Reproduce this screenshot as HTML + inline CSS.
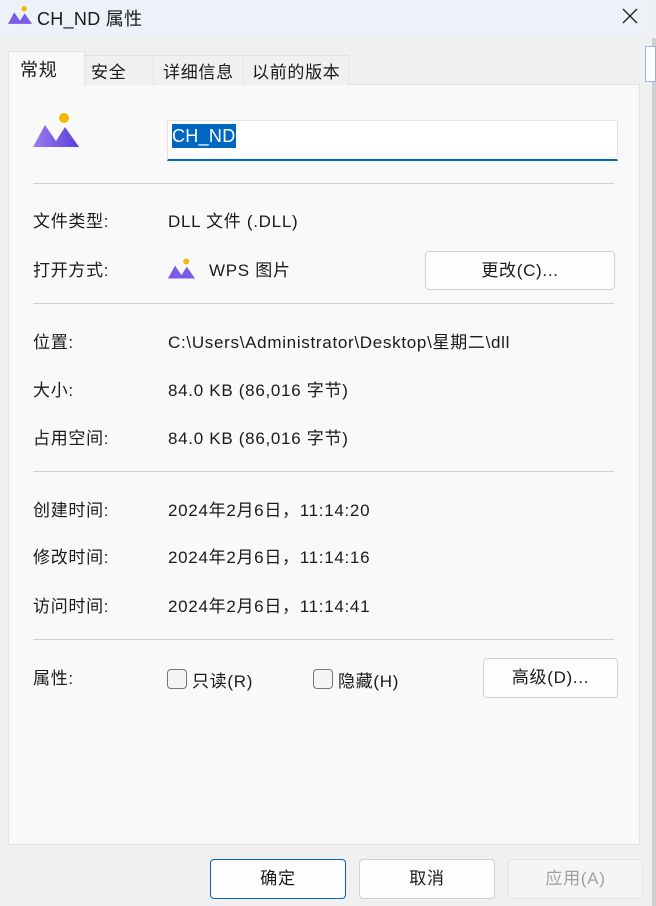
<!DOCTYPE html>
<html><head><meta charset="utf-8"><style>
*{margin:0;padding:0;box-sizing:border-box}
body{width:656px;height:906px;background:#f0f0f0;font-family:"Liberation Sans","Noto Sans CJK SC",sans-serif;font-size:17px;letter-spacing:.7px;color:#1a1a1a;position:relative;overflow:hidden}
.a{position:absolute;white-space:nowrap}
.title{left:0;top:0;width:652px;height:38px;background:#eef2f8}
.panel{left:8px;top:84px;width:632px;height:761px;background:#f9f9f9;border:1px solid #e3e3e3}
.tab{top:55px;height:30px;background:#f0f0f0;border:1px solid #e3e3e3;border-bottom:none;padding:2px 0 0 6px}
.sep{left:33px;width:581px;height:1px;background:#d0d0d0}
.btn{background:#fdfdfd;border:1px solid #d0d0d0;border-radius:4px;text-align:center;line-height:37px}
.cb{width:20px;height:20px;border:1px solid #777;border-radius:4px;background:#f5f5f5}
</style></head><body>
<div class="a title"></div>
<svg class="a" style="left:8px;top:6px" width="24" height="18" viewBox="0 0 46 34"><circle cx="31" cy="5" r="5" fill="#f5b800"/><path d="M0 34 L12 12 L23 28 L32 14 L46 34 Z" fill="#7b5ce6"/></svg>
<div class="a" style="left:37px;top:5px;font-size:18px;letter-spacing:.3px">CH_ND 属性</div>
<svg class="a" style="left:621px;top:7px" width="18" height="18"><path d="M2 2L16 16M16 2L2 16" stroke="#222" stroke-width="1.4"/></svg>
<div class="a" style="left:652px;top:38px;width:4px;height:868px;background:#cfcfcf"></div>
<div class="a" style="left:645px;top:46px;width:11px;height:36px;border:1px solid #99b4e0;background:#fff"></div>
<div class="a panel"></div>
<div class="a tab" style="left:84px;width:70px">安全</div>
<div class="a tab" style="left:153px;width:91px;padding-left:9px">详细信息</div>
<div class="a tab" style="left:243px;width:106px;padding-left:8px">以前的版本</div>
<div class="a" style="left:8px;top:51px;width:77px;height:35px;background:#f9f9f9;border:1px solid #e3e3e3;border-bottom:none;padding:4px 0 0 11px;font-size:18px">常规</div>
<svg class="a" style="left:33px;top:112px" width="46" height="36" viewBox="0 0 46 34"><circle cx="31" cy="5" r="5" fill="#f5b800"/><defs><linearGradient id="g" x1="0" x2="1"><stop offset="0" stop-color="#9b7df0"/><stop offset="1" stop-color="#5a3fd6"/></linearGradient></defs><path d="M0 34 L12 12 L23 28 L32 14 L46 34 Z" fill="url(#g)"/></svg>
<div class="a" style="left:167px;top:120px;width:451px;height:41px;background:#fff;border:1px solid #e3e3e3;border-bottom:2px solid #0067c0"></div>
<div class="a" style="left:172px;top:124px;width:64px;height:24px;background:#0067c0;color:#fff;font-size:18px;letter-spacing:.3px;line-height:24px">CH_ND</div>
<div class="a sep" style="top:183px"></div>
<div class="a" style="left:33px;top:207px">文件类型:</div><div class="a" style="left:168px;top:207px">DLL 文件 (.DLL)</div>
<div class="a" style="left:33px;top:256px">打开方式:</div>
<svg class="a" style="left:168px;top:258px" width="27" height="21" viewBox="0 0 46 34"><circle cx="31" cy="5" r="5" fill="#f5b800"/><path d="M0 34 L12 12 L23 28 L32 14 L46 34 Z" fill="#7b5ce6"/></svg>
<div class="a" style="left:209px;top:256px">WPS 图片</div>
<div class="a btn" style="left:425px;top:251px;width:190px;height:39px">更改(C)...</div>
<div class="a sep" style="top:303px"></div>
<div class="a" style="left:33px;top:328px">位置:</div><div class="a" style="left:168px;top:328px">C:\Users\Administrator\Desktop\星期二\dll</div>
<div class="a" style="left:33px;top:376px">大小:</div><div class="a" style="left:168px;top:376px">84.0 KB (86,016 字节)</div>
<div class="a" style="left:33px;top:424px">占用空间:</div><div class="a" style="left:168px;top:424px">84.0 KB (86,016 字节)</div>
<div class="a sep" style="top:471px"></div>
<div class="a" style="left:33px;top:496px">创建时间:</div><div class="a" style="left:168px;top:496px">2024年2月6日，11:14:20</div>
<div class="a" style="left:33px;top:543px">修改时间:</div><div class="a" style="left:168px;top:543px">2024年2月6日，11:14:16</div>
<div class="a" style="left:33px;top:592px">访问时间:</div><div class="a" style="left:168px;top:592px">2024年2月6日，11:14:41</div>
<div class="a sep" style="top:639px"></div>
<div class="a" style="left:33px;top:664px">属性:</div>
<div class="a cb" style="left:167px;top:669px"></div><div class="a" style="left:192px;top:667px">只读(R)</div>
<div class="a cb" style="left:313px;top:669px"></div><div class="a" style="left:338px;top:667px">隐藏(H)</div>
<div class="a btn" style="left:483px;top:658px;width:135px;height:40px">高级(D)...</div>
<div class="a btn" style="left:210px;top:859px;width:136px;height:40px;border-color:#0067c0">确定</div>
<div class="a btn" style="left:359px;top:859px;width:136px;height:40px">取消</div>
<div class="a btn" style="left:508px;top:859px;width:135px;height:40px;background:#f5f5f5;border-color:#e5e5e5;color:#a0a0a0">应用(A)</div>
</body></html>
